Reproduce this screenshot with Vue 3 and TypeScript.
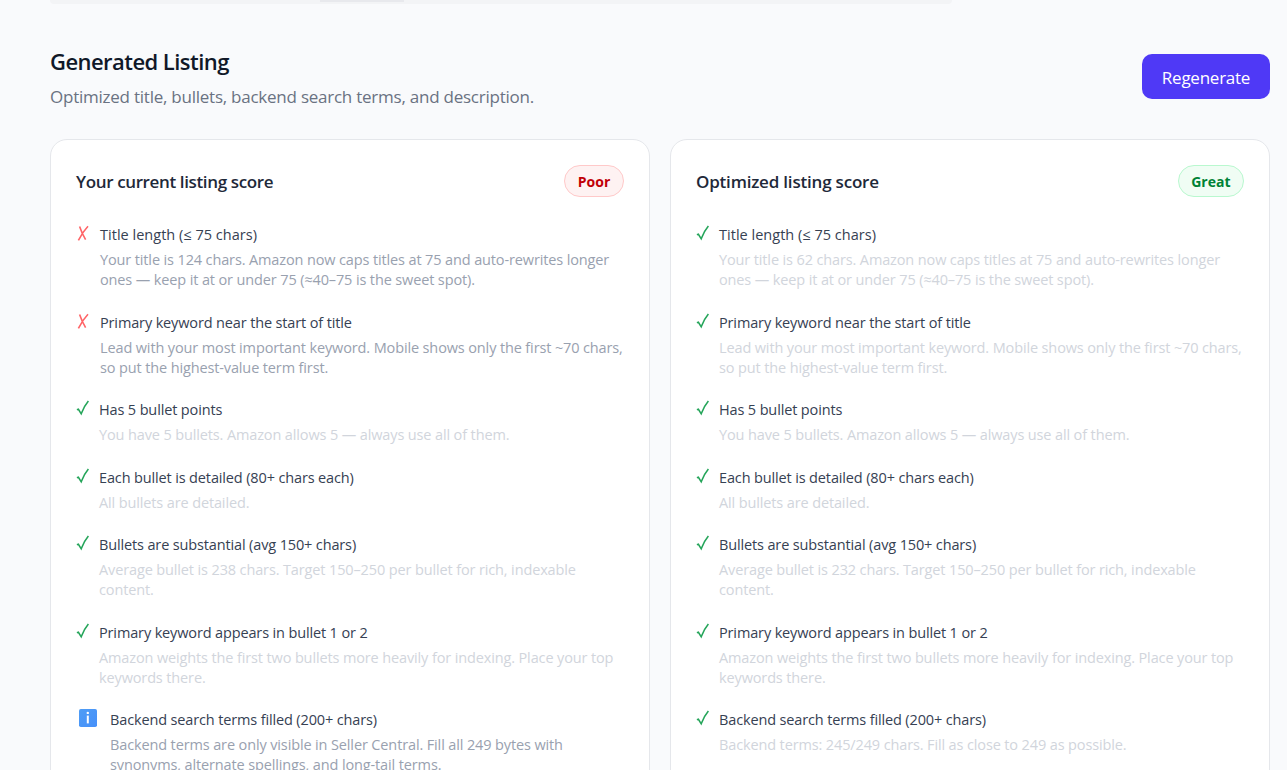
<script setup lang="ts">
type Status = 'fail' | 'pass' | 'info'

interface Check {
  status: Status
  label: string
  detail: string[]
}

interface ScoreCard {
  title: string
  rating: string
  tone: 'poor' | 'great'
  checks: Check[]
}

const cards: ScoreCard[] = [
  {
    title: 'Your current listing score',
    rating: 'Poor',
    tone: 'poor',
    checks: [
      { status: 'fail', label: 'Title length (≤ 75 chars)', detail: ['Your title is 124 chars. Amazon now caps titles at 75 and auto-rewrites longer', 'ones — keep it at or under 75 (≈40–75 is the sweet spot).'] },
      { status: 'fail', label: 'Primary keyword near the start of title', detail: ['Lead with your most important keyword. Mobile shows only the first ~70 chars,', 'so put the highest-value term first.'] },
      { status: 'pass', label: 'Has 5 bullet points', detail: ['You have 5 bullets. Amazon allows 5 — always use all of them.'] },
      { status: 'pass', label: 'Each bullet is detailed (80+ chars each)', detail: ['All bullets are detailed.'] },
      { status: 'pass', label: 'Bullets are substantial (avg 150+ chars)', detail: ['Average bullet is 238 chars. Target 150–250 per bullet for rich, indexable', 'content.'] },
      { status: 'pass', label: 'Primary keyword appears in bullet 1 or 2', detail: ['Amazon weights the first two bullets more heavily for indexing. Place your top', 'keywords there.'] },
      { status: 'info', label: 'Backend search terms filled (200+ chars)', detail: ['Backend terms are only visible in Seller Central. Fill all 249 bytes with', 'synonyms, alternate spellings, and long-tail terms.'] },
    ],
  },
  {
    title: 'Optimized listing score',
    rating: 'Great',
    tone: 'great',
    checks: [
      { status: 'pass', label: 'Title length (≤ 75 chars)', detail: ['Your title is 62 chars. Amazon now caps titles at 75 and auto-rewrites longer', 'ones — keep it at or under 75 (≈40–75 is the sweet spot).'] },
      { status: 'pass', label: 'Primary keyword near the start of title', detail: ['Lead with your most important keyword. Mobile shows only the first ~70 chars,', 'so put the highest-value term first.'] },
      { status: 'pass', label: 'Has 5 bullet points', detail: ['You have 5 bullets. Amazon allows 5 — always use all of them.'] },
      { status: 'pass', label: 'Each bullet is detailed (80+ chars each)', detail: ['All bullets are detailed.'] },
      { status: 'pass', label: 'Bullets are substantial (avg 150+ chars)', detail: ['Average bullet is 232 chars. Target 150–250 per bullet for rich, indexable', 'content.'] },
      { status: 'pass', label: 'Primary keyword appears in bullet 1 or 2', detail: ['Amazon weights the first two bullets more heavily for indexing. Place your top', 'keywords there.'] },
      { status: 'pass', label: 'Backend search terms filled (200+ chars)', detail: ['Backend terms: 245/249 chars. Fill as close to 249 as possible.'] },
    ],
  },
]
</script>

<template>
  <main class="page">
    <div class="panel-edge"><span class="panel-tab"></span></div>

    <header class="heading">
      <div>
        <h2>Generated Listing</h2>
        <p>Optimized title, bullets, backend search terms, and description.</p>
      </div>
      <button type="button" class="regenerate">Regenerate</button>
    </header>

    <div class="cards">
      <section v-for="card in cards" :key="card.title" class="card">
        <div class="card-head">
          <h3 :class="card.tone + '-title'">{{ card.title }}</h3>
          <span class="badge" :class="card.tone">{{ card.rating }}</span>
        </div>
        <ul class="checks">
          <li v-for="check in card.checks" :key="check.label" class="check" :class="check.status">
            <svg v-if="check.status === 'fail'" class="icon" viewBox="0 0 14 20">
              <path d="M3.6 3.6 Q5.6 9.9 9.6 16.6 M12 3.2 Q6.6 8.9 2.4 17.4" />
            </svg>
            <svg v-else-if="check.status === 'pass'" class="icon" viewBox="0 0 13 20">
              <path d="M0.9 11.8 L2.4 11.3 L5.2 15.8 Q8 8.2 12.4 3" />
            </svg>
            <svg v-else class="icon" viewBox="0 0 24 20">
              <defs>
                <linearGradient id="info-fill" x1="0" y1="0" x2="1" y2="1">
                  <stop offset="0" stop-color="#4f9df5" />
                  <stop offset="1" stop-color="#4690fa" />
                </linearGradient>
              </defs>
              <rect x="3" y="1" width="18" height="18" rx="1.8" fill="url(#info-fill)" />
              <path class="info-mark" d="M11.8 7.6 V15.4" />
              <circle cx="11.8" cy="4.9" r="1.2" fill="#fff" />
            </svg>
            <div class="copy">
              <div class="label">{{ check.label }}</div>
              <div class="detail">
                <div v-for="line in check.detail" :key="line">{{ line }}</div>
              </div>
            </div>
          </li>
        </ul>
      </section>
    </div>
  </main>
</template>

<style>
html,
body {
  margin: 0;
  overflow: hidden;
  background: #f9fafc;
}
</style>

<style scoped>
.page {
  box-sizing: border-box;
  width: 1287px;
  height: 770px;
  overflow: hidden;
  padding: 0 17px 0 50px;
  background: #f9fafc;
  font-family: 'Open Sans', 'Noto Sans', sans-serif;
}
.panel-edge {
  width: 902px;
  height: 4px;
  border-radius: 0 0 8px 8px;
  background: #f3f4f6;
}
.panel-tab {
  display: block;
  width: 84px;
  height: 2px;
  margin-left: 270px;
  background: #e8e9ed;
}
.heading {
  display: flex;
  justify-content: space-between;
  align-items: center;
  height: 65px;
  margin-top: 40px;
}
h2,
h3,
p {
  margin: 0;
}
h2 {
  color: #101828;
  font-size: 22px;
  line-height: 34px;
  font-weight: 600;
  letter-spacing: -0.55px;
}
p {
  margin-top: 7px;
  color: #6a7282;
  font-size: 17px;
  line-height: 24px;
  letter-spacing: -0.24px;
}
.regenerate {
  box-sizing: border-box;
  width: 128px;
  height: 45px;
  padding: 2px 0 0;
  border: 0;
  border-radius: 10px;
  background: #4f39f6;
  color: #fff;
  font-family: inherit;
  font-size: 17px;
  letter-spacing: -0.25px;
}
.cards {
  display: grid;
  grid-template-columns: 1fr 1fr;
  gap: 20px;
  margin-top: 30px;
}
.card {
  box-sizing: border-box;
  height: 700px;
  padding: 25px;
  border: 1px solid #e5e7eb;
  border-radius: 17px;
  background: #fff;
}
.card-head {
  display: flex;
  justify-content: space-between;
  align-items: center;
  height: 32px;
}
h3 {
  padding-top: 1px;
  color: #1e2939;
  font-size: 17px;
  line-height: 26px;
  font-weight: 600;
  letter-spacing: -0.37px;
}
.great-title {
  letter-spacing: -0.2px;
}
.badge {
  box-sizing: border-box;
  min-width: 60px;
  height: 32px;
  padding: 0 12.5px;
  border: 1px solid;
  border-radius: 16px;
  font-size: 14px;
  line-height: 31px;
  font-weight: 700;
  text-align: center;
}
.poor {
  border-color: #ffc9c9;
  background: #fef2f2;
  color: #c10007;
}
.great {
  border-color: #b9f8cf;
  background: #f0fdf4;
  color: #008236;
}
.checks {
  display: grid;
  gap: 19.5px;
  margin: 25px 0 0;
  padding: 0;
  list-style: none;
}
.check {
  display: flex;
  gap: 10px;
}
.icon {
  flex: none;
  width: 13px;
  height: 20px;
  margin-top: 1px;
  fill: none;
  stroke-width: 1.6;
}
.fail .icon {
  width: 14px;
  stroke: #ff6467;
}
.pass .icon {
  stroke: #25a55a;
}
.info .icon {
  width: 24px;
}
.icon .info-mark {
  stroke: #fff;
  stroke-width: 2;
}
.label {
  color: #364153;
  font-size: 14.5px;
  line-height: 25px;
  letter-spacing: -0.14px;
  white-space: nowrap;
}
.check:first-child .label {
  letter-spacing: 0.02px;
}
.detail {
  margin-top: 3px;
  color: #99a1af;
  font-size: 14.5px;
  line-height: 20px;
  letter-spacing: -0.13px;
  white-space: nowrap;
}
.pass .detail {
  color: #d1d5dc;
}
</style>
